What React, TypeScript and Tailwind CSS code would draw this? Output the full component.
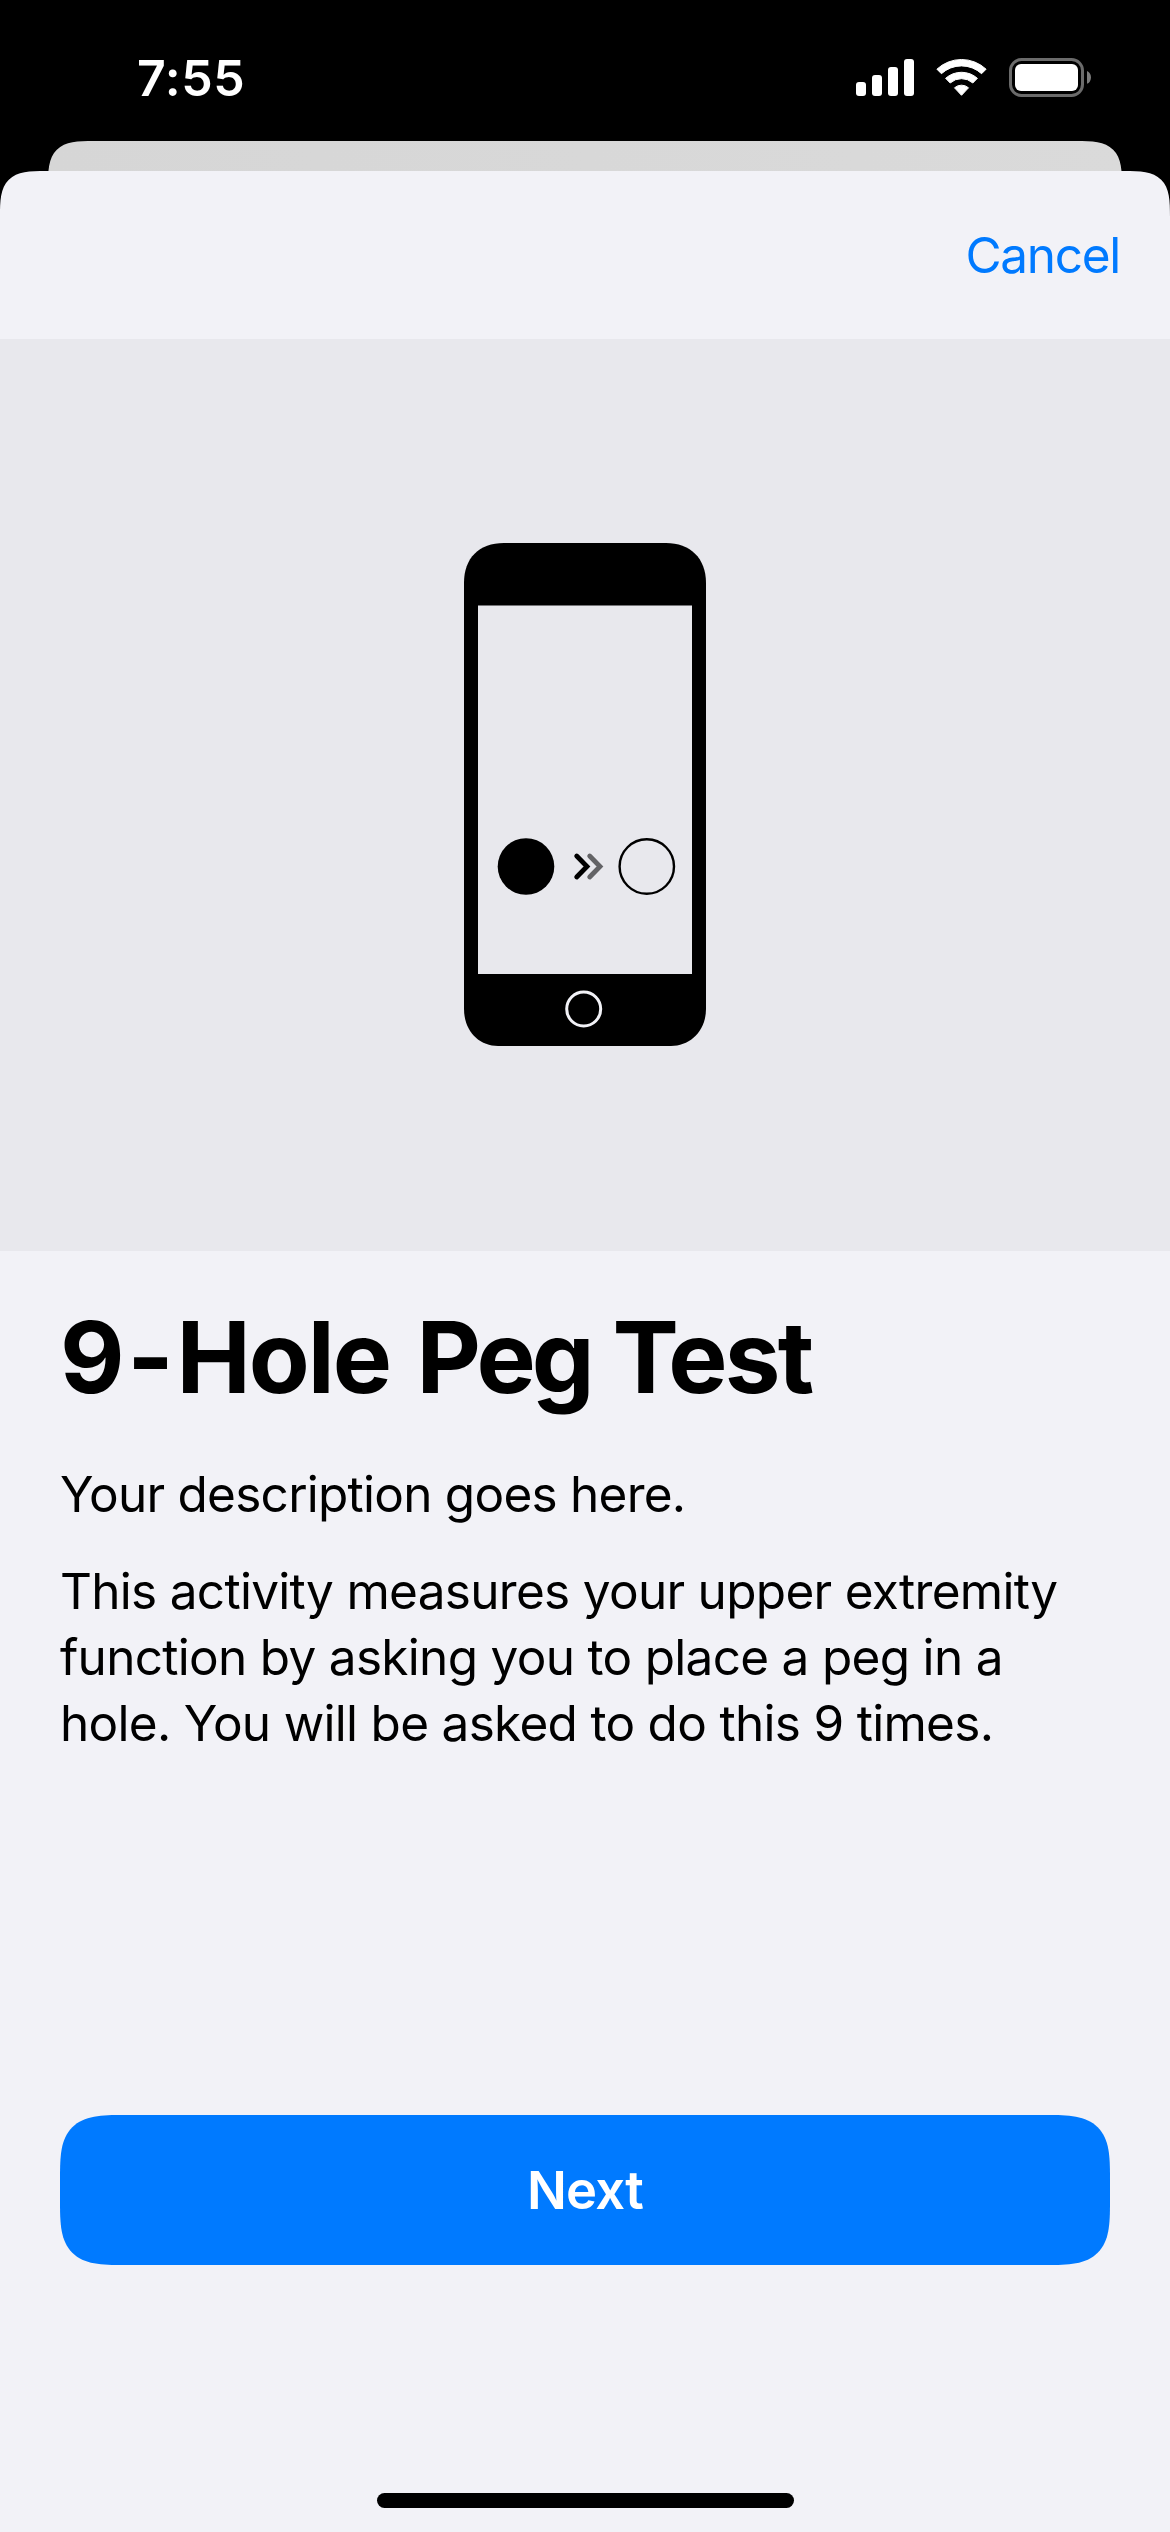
function SignalIcon() {
  return (
    <svg width="58" height="38" viewBox="0 0 58 38" fill="white" aria-hidden="true">
      <rect x="0" y="24" width="10" height="14" rx="3" />
      <rect x="16" y="17" width="10" height="21" rx="3" />
      <rect x="32" y="9" width="10" height="29" rx="3" />
      <rect x="48" y="1" width="10" height="37" rx="3" />
    </svg>
  );
}

function WifiIcon() {
  return (
    <svg
      width="51"
      height="38"
      viewBox="0 0 51 38"
      fill="white"
      stroke="white"
      strokeWidth="1"
      strokeLinejoin="round"
      aria-hidden="true"
    >
      <path d="M0.9 11.2 A36 36 0 0 1 50.1 11.2 L45.6 15.7 A29.8 29.8 0 0 0 5.4 15.7 Z" />
      <path d="M9.6 20.3 A24 24 0 0 1 41.4 20.3 L36.8 25 A16.9 16.9 0 0 0 14.2 25 Z" />
      <path d="M18.5 29.8 A10.6 10.6 0 0 1 32.5 29.8 L25.5 37.3 Z" />
    </svg>
  );
}

function BatteryIcon() {
  return (
    <svg width="82" height="39" viewBox="0 0 82 39" aria-hidden="true">
      <rect x="1.5" y="1.5" width="72" height="36" rx="11" fill="none" stroke="#6b6b6b" strokeWidth="3" />
      <rect x="6" y="6" width="63" height="27" rx="6" fill="white" />
      <path d="M78 13 C80.4 14 82 16.5 82 19.4 C82 22.3 80.4 24.8 78 25.8 Z" fill="#7c7c7c" />
    </svg>
  );
}

function PhoneIllustration() {
  return (
    <svg width="242" height="503" viewBox="0 0 242 503" role="img" aria-label="Move the peg into the hole">
      <path
        d="M40 0 H202 C226 0 242 15 242 40 V466 C242 488 226 503 207 503 H34 C15 503 0 488 0 466 V40 C0 15 15 0 40 0 Z"
        fill="black"
      />
      <rect x="14" y="62.5" width="214" height="368.5" fill="#e8e8ed" />
      <circle cx="62" cy="323.5" r="28.3" fill="black" />
      <path d="M112.7 313 L123 323.5 L112.7 334" fill="none" stroke="black" strokeWidth="4.8" strokeLinecap="round" />
      <path d="M125.7 313 L136 323.5 L125.7 334" fill="none" stroke="#636366" strokeWidth="4.8" strokeLinecap="round" />
      <circle cx="182.8" cy="323.5" r="27.2" fill="none" stroke="black" strokeWidth="2.4" />
      <circle cx="119.7" cy="466" r="17" fill="none" stroke="#f2f2f7" strokeWidth="3" />
    </svg>
  );
}

function StatusBar() {
  return (
    <div className="flex h-[141px] shrink-0 items-start justify-between pr-[79px] pl-[137px]">
      <time className="mt-12 text-[50px] leading-[60px] font-semibold tracking-[0.6px] text-white">7:55</time>
      <div className="mt-[58px] flex items-start">
        <SignalIcon />
        <div className="ml-[22px]">
          <WifiIcon />
        </div>
        <div className="ml-[22px]">
          <BatteryIcon />
        </div>
      </div>
    </div>
  );
}

export default function App() {
  return (
    <div className="flex h-[2532px] w-[1170px] flex-col overflow-hidden bg-black font-['Inter',sans-serif] text-black">
      <StatusBar />
      <div className="mx-12 -mb-[30px] h-[60px] shrink-0 rounded-t-[46px] bg-linear-to-r from-[#d6d6d6] to-[#dadada] [corner-shape:superellipse(1.7)]" />
      <main className="relative flex flex-1 flex-col rounded-t-[46px] bg-[#f2f2f7] [corner-shape:superellipse(1.7)]">
        <header className="flex h-[168px] shrink-0 items-center justify-end pr-[50px]">
          <button className="text-[49.5px] leading-[66px] tracking-[-1.3px] text-[#007aff]">Cancel</button>
        </header>
        <div className="flex h-[912px] shrink-0 items-center justify-center bg-[#e8e8ed] pb-px">
          <PhoneIllustration />
        </div>
        <section className="px-[60px]">
          <h1 className="mt-[46px] text-[99.5px] leading-[120px] font-bold tracking-[-2px] [word-spacing:5px]">
            <span className="tracking-[2.6px]">9-</span>Hole <span className="tracking-[-3.8px]">Peg</span>{" "}
            <span className="ml-[-5px] tracking-[-2.8px]">Test</span>
          </h1>
          <p className="mt-11 text-[49.5px] leading-[66px] tracking-[-0.75px]">Your description goes here.</p>
          <p className="mt-[31px] text-[49.5px] leading-[66px] tracking-[-0.7px]">
            This activity measures your upper extremity function by asking you to place a peg in a hole. You will be
            asked to do this 9 times.
          </p>
        </section>
        <footer className="mt-auto flex flex-col items-center px-[60px] pb-6">
          <button className="h-[150px] w-full rounded-[64px] bg-[#007aff] text-[52.5px] font-semibold tracking-[-0.7px] text-white [corner-shape:superellipse(1.7)]">
            Next
          </button>
          <div className="mt-[228px] h-[15px] w-[417px] rounded-full bg-black" />
        </footer>
      </main>
    </div>
  );
}
